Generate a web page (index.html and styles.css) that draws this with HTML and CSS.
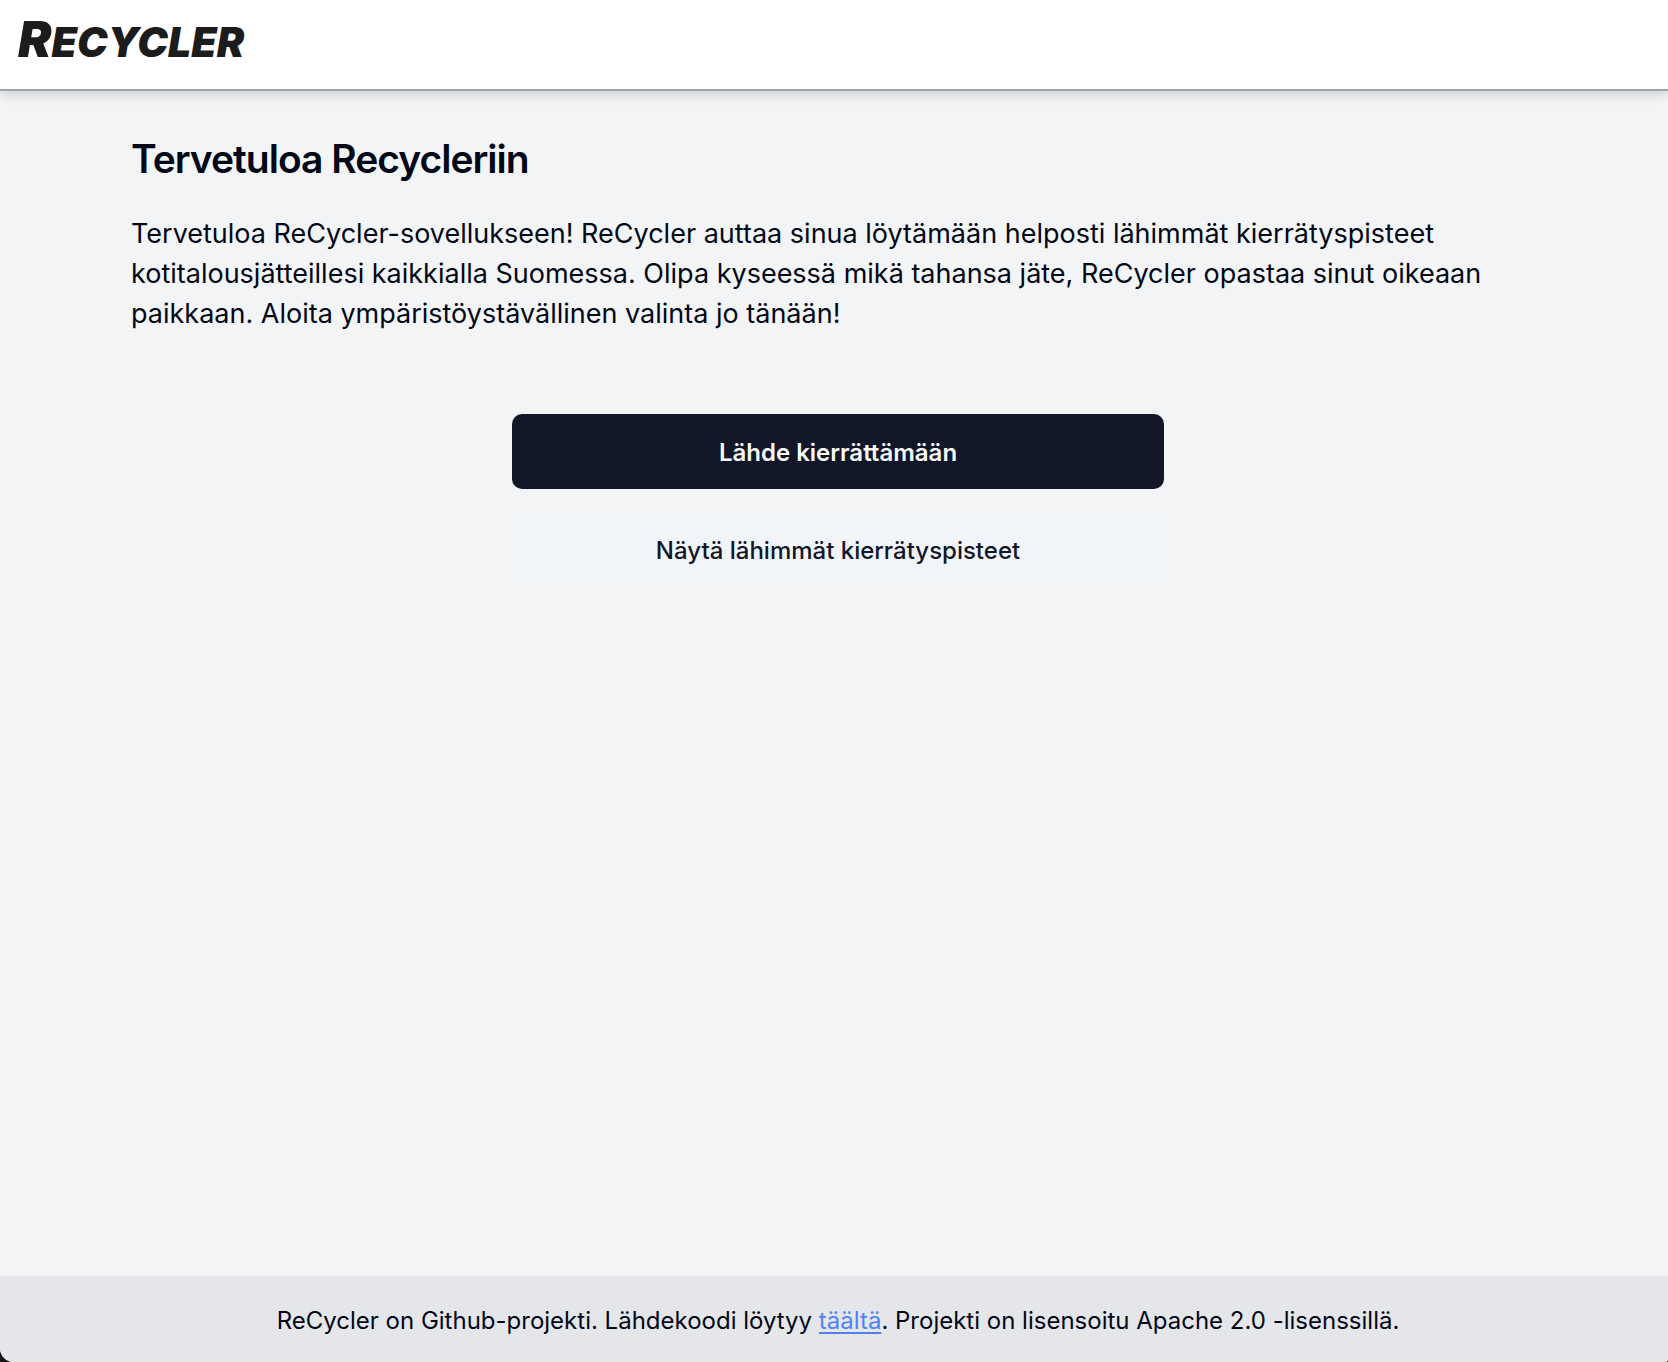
FILE: index.html
```html
<!DOCTYPE html>
<html lang="fi">
<head>
<meta charset="utf-8">
<meta name="viewport" content="width=device-width, initial-scale=1">
<title>Recycler</title>
<link rel="stylesheet" href="styles.css">
</head>
<body>
<div class="page">
  <header class="header"><a class="logo" href="#">Recycler</a></header>
  <main class="main">
    <h1 class="title">Tervetuloa Recycleriin</h1>
    <p class="intro">Tervetuloa ReCycler-sovellukseen! ReCycler auttaa sinua löytämään helposti lähimmät kierrätyspisteet kotitalousjätteillesi kaikkialla Suomessa. Olipa kyseessä mikä tahansa jäte, ReCycler opastaa sinut oikeaan paikkaan. Aloita ympäristöystävällinen valinta jo tänään!</p>
    <div class="actions">
      <button class="button button-primary" type="button">Lähde kierrättämään</button>
      <button class="button button-secondary" type="button">Näytä lähimmät kierrätyspisteet</button>
    </div>
  </main>
  <footer class="footer">
    <p class="footer-text">ReCycler on Github-projekti. Lähdekoodi löytyy <a class="link" href="#">täältä</a>. Projekti on lisensoitu Apache 2.0 -lisenssillä.</p>
  </footer>
</div>
</body>
</html>
```
FILE: styles.css
```css
* { box-sizing: border-box; }
html { background: #161616; }
body {
  margin: 0;
  font-family: Inter, "Liberation Sans", sans-serif;
  color: #020817;
}
.page {
  display: flex;
  flex-direction: column;
  min-height: 100vh;
  overflow: hidden;
  background: #f3f4f6;
  border-radius: 0 0 3px 14px;
}
.header {
  height: 91px;
  padding: 13px 18px;
  background: #fff;
  border-bottom: 2px solid #9ca3af;
  box-shadow: 0 2px 12px rgba(0, 0, 0, 0.2);
}
.logo {
  display: inline-block;
  font-family: "Permanent Marker", Inter, sans-serif;
  font-size: 41px;
  line-height: 52px;
  font-weight: 900;
  font-style: italic;
  text-transform: uppercase;
  color: #1c1c1c;
  text-decoration: none;
}
.logo::first-letter {
  font-size: 50px;
}
.main {
  flex: 1;
  padding: 44px 123px 48px 131px;
}
.title {
  margin: 0;
  font-size: 39px;
  line-height: 48px;
  font-weight: 600;
  letter-spacing: -1px;
}
.intro {
  margin: 31px 0 0;
  font-size: 27px;
  line-height: 40px;
}
.actions {
  display: flex;
  flex-direction: column;
  gap: 27px;
  max-width: 652px;
  margin: 80px auto 0;
}
.button {
  width: 100%;
  padding: 2px 16px 0;
  border: 0;
  border-radius: 10px;
  font-family: inherit;
  font-size: 24px;
  line-height: 32px;
  font-weight: 500;
}
.button-primary {
  height: 75px;
  background: #111628;
  color: #f8fafc;
  font-weight: 600;
}
.button-secondary {
  height: 68px;
  background: #f1f5fa;
  color: #111628;
}
.footer {
  padding: 29px 24px 25px 32px;
  background: #e5e6ea;
  text-align: center;
}
.footer-text {
  margin: 0;
  font-size: 24px;
  line-height: 32px;
}
.link {
  color: #4f83f1;
  text-decoration: underline;
  text-decoration-thickness: 2px;
  text-underline-offset: 3px;
}
```
